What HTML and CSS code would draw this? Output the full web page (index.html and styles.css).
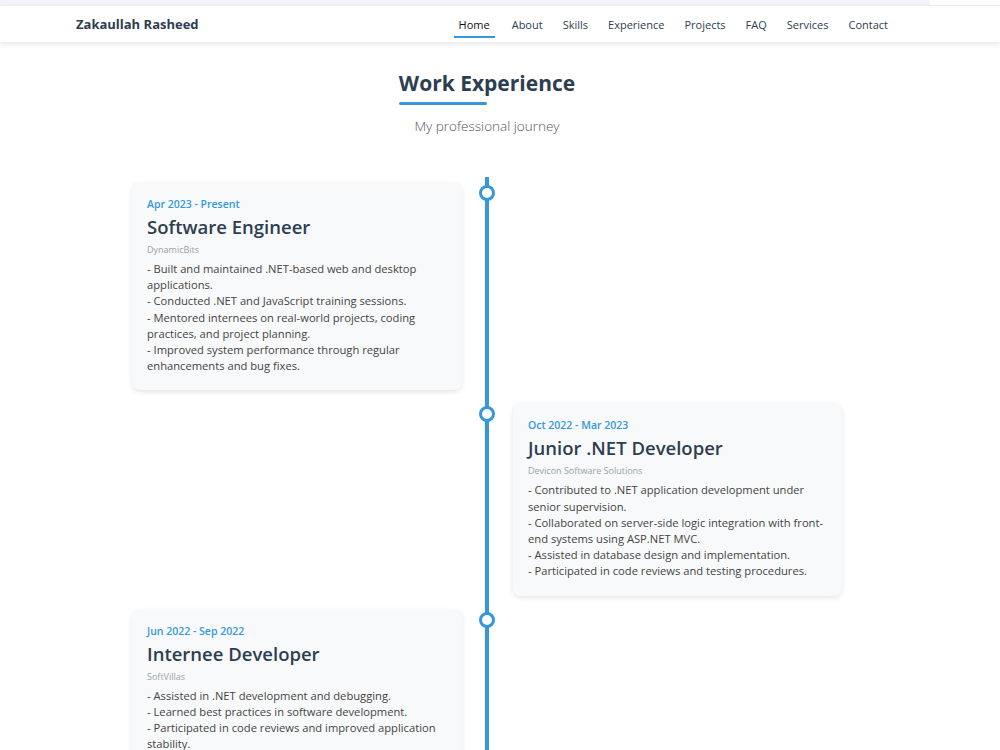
FILE: index.html
```html
<!DOCTYPE html>
<html lang="en">
<head>
  <meta charset="UTF-8" />
  <meta name="viewport" content="width=device-width, initial-scale=1.0" />
  <title>Zakaullah Rasheed - Experience</title>
  <link rel="stylesheet" href="styles.css">
</head>
<body>
  <div class="top-strip"></div>
  <header class="navbar">
    <div class="container nav-inner">
      <div class="brand">Zakaullah Rasheed</div>
      <nav class="nav-links">
        <a href="#" class="active">Home</a>
        <a href="#">About</a>
        <a href="#">Skills</a>
        <a href="#">Experience</a>
        <a href="#">Projects</a>
        <a href="#">FAQ</a>
        <a href="#">Services</a>
        <a href="#">Contact</a>
      </nav>
    </div>
  </header>

  <section class="experience">
    <div class="section-head">
      <h2 class="section-title">Work Experience</h2>
      <p class="section-sub">My professional journey</p>
    </div>

    <div class="timeline">
      <div class="timeline-item left">
        <div class="card">
          <div class="date">Apr 2023 - Present</div>
          <h3>Software Engineer</h3>
          <div class="company">DynamicBits</div>
          <p>- Built and maintained .NET-based web and desktop applications.<br>
          - Conducted .NET and JavaScript training sessions.<br>
          - Mentored internees on real-world projects, coding practices, and project planning.<br>
          - Improved system performance through regular enhancements and bug fixes.</p>
        </div>
      </div>

      <div class="timeline-item right">
        <div class="card">
          <div class="date">Oct 2022 - Mar 2023</div>
          <h3>Junior .NET Developer</h3>
          <div class="company">Devicon Software Solutions</div>
          <p>- Contributed to .NET application development under senior supervision.<br>
          - Collaborated on server-side logic integration with front-end systems using ASP.NET MVC.<br>
          - Assisted in database design and implementation.<br>
          - Participated in code reviews and testing procedures.</p>
        </div>
      </div>

      <div class="timeline-item left">
        <div class="card">
          <div class="date">Jun 2022 - Sep 2022</div>
          <h3>Internee Developer</h3>
          <div class="company">SoftVillas</div>
          <p>- Assisted in .NET development and debugging.<br>
          - Learned best practices in software development.<br>
          - Participated in code reviews and improved application stability.</p>
        </div>
      </div>
    </div>
  </section>
</body>
</html>
```

FILE: styles.css
```css
body {
  margin: 0;
  font-family: 'Open Sans', 'Noto Sans', sans-serif;
  background-color: #ffffff;
  color: #2c3e50;
  overflow: hidden;
}

.top-strip {
  width: 930px;
  height: 5px;
  background-color: #f3f4fb;
}

.navbar {
  background-color: #ffffff;
  border-top: 1px solid #ececec;
  box-shadow: 0 2px 5px rgba(0, 0, 0, 0.1);
}

.container {
  width: 817px;
  margin-left: 76px;
}

.nav-inner {
  height: 36px;
  display: flex;
  align-items: center;
  justify-content: space-between;
}

.brand {
  font-size: 13px;
  font-weight: 700;
  color: #2c3e50;
}

.nav-links {
  display: flex;
  gap: 10px;
  height: 100%;
}

.nav-links a {
  display: flex;
  align-items: center;
  padding: 2px 5px 0;
  text-decoration: none;
  font-size: 11px;
  color: #2c3e50;
  border-bottom: 2px solid transparent;
  box-sizing: border-box;
}

.nav-links a.active {
  color: #111;
  border-bottom-color: #3498db;
  height: 32px;
  padding-top: 6px;
  margin-right: 2px;
}

.experience {
  width: 974px;
  padding-top: 27px;
}

.section-head {
  text-align: center;
}

.section-title {
  display: inline-block;
  position: relative;
  margin: 0;
  font-size: 21px;
  font-weight: 700;
  color: #2c3e50;
  padding-bottom: 8px;
}

.section-title::after {
  content: "";
  position: absolute;
  left: 0;
  bottom: 0;
  width: 50%;
  height: 3px;
  border-radius: 2px;
  background-color: #3498db;
}

.section-sub {
  margin: 12px 0 0;
  font-size: 13.5px;
  font-weight: 300;
  color: #555;
}

.timeline {
  position: relative;
  width: 710px;
  margin: 42px auto 0;
  padding-top: 5px;
}

.timeline::before {
  content: "";
  position: absolute;
  top: 0;
  bottom: -200px;
  left: 353px;
  width: 4px;
  background-color: #3498db;
}

.timeline-item {
  position: relative;
  width: 50%;
  box-sizing: border-box;
  margin-bottom: 13px;
}

.timeline-item.left {
  padding-right: 25px;
}

.timeline-item.right {
  margin-left: 50%;
  padding-left: 26px;
}

.timeline-item::after {
  content: "";
  position: absolute;
  top: 3px;
  width: 10px;
  height: 10px;
  border: 3px solid #3498db;
  border-radius: 50%;
  background-color: #ffffff;
}

.timeline-item.left::after {
  right: -8px;
}

.timeline-item.right::after {
  left: -8px;
}

.card {
  background-color: #f8f9fa;
  border-radius: 8px;
  padding: 15px 15px 16px;
  box-shadow: 0 2px 5px rgba(0, 0, 0, 0.1);
}

.card .date {
  font-size: 10.5px;
  line-height: 14px;
  font-weight: 600;
  color: #3498db;
}

.card h3 {
  margin: 4px 0 5px;
  font-size: 18.5px;
  line-height: 24px;
  font-weight: 600;
  color: #2c3e50;
}

.card .company {
  font-size: 9px;
  line-height: 12px;
  color: #95a5a6;
  margin-bottom: 5px;
}

.card p {
  margin: 0;
  font-size: 11.2px;
  line-height: 16.2px;
  color: #444;
}
```
